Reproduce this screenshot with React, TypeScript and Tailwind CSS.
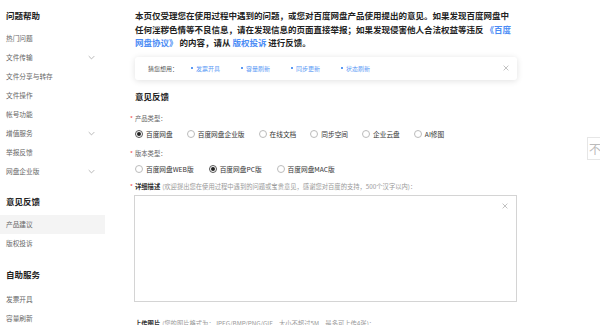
import type { ReactNode } from 'react'

const FONT = "font-['Noto_Sans_CJK_SC','Noto_Sans',sans-serif]"

const Chevron = () => (
  <svg className="w-[7px] h-[5px] text-[#999]" viewBox="0 0 10 6" fill="none" stroke="currentColor" strokeWidth={1}>
    <path d="M1 1l4 4 4-4" />
  </svg>
)

const Close = ({ className = '' }: { className?: string }) => (
  <svg className={`w-[6px] h-[6px] text-[#aaa] ${className}`} viewBox="0 0 10 10" stroke="currentColor" strokeWidth={1.2}>
    <path d="M1 1l8 8M9 1l-8 8" />
  </svg>
)

const SideHeading = ({ children }: { children: ReactNode }) => (
  <div className="h-[27px] flex items-center px-[6px] text-[8.5px] font-bold text-[#222]">{children}</div>
)

const SideItem = ({ label, chevron, active }: { label: string; chevron?: boolean; active?: boolean }) => (
  <div className={`h-[19px] flex items-center justify-between pl-[6px] pr-[10px] text-[6.7px] text-[#666] ${active ? 'bg-[#f4f4f4]' : ''}`}>
    <span>{label}</span>
    {chevron && <Chevron />}
  </div>
)

const Radio = ({ label, checked }: { label: string; checked?: boolean }) => (
  <label className="flex items-center gap-[3px]">
    <span
      className={`w-[8px] h-[8px] rounded-full border flex items-center justify-center ${
        checked ? 'border-[#555]' : 'border-[#bbb]'
      }`}
    >
      {checked && <span className="w-[4px] h-[4px] rounded-full bg-[#222]" />}
    </span>
    <span className="text-[6.7px] text-[#333]">{label}</span>
  </label>
)

const FieldLabel = ({ children }: { children: ReactNode }) => (
  <div className="flex items-center text-[6.3px] text-[#666]">
    <span className="text-[#f04a4a] w-[5px] -ml-[5px]">*</span>
    {children}
  </div>
)

const links = ['发票开具', '容量刷新', '同步更新', '状态刷新']

export default function App() {
  return (
    <div className={`relative w-[600px] h-[325px] overflow-hidden bg-white flex ${FONT}`}>
      <aside className="w-[105px] shrink-0 pt-[2px]">
        <SideHeading>问题帮助</SideHeading>
        <SideItem label="热门问题" />
        <SideItem label="文件传输" chevron />
        <SideItem label="文件分享与转存" />
        <SideItem label="文件操作" />
        <SideItem label="帐号功能" />
        <SideItem label="增值服务" chevron />
        <SideItem label="举报反馈" />
        <SideItem label="网盘企业版" chevron />
        <div className="mt-[7px]">
          <SideHeading>意见反馈</SideHeading>
          <SideItem label="产品建议" active />
          <SideItem label="版权投诉" />
        </div>
        <div className="mt-[8px]">
          <SideHeading>自助服务</SideHeading>
          <div className="h-[2px]" />
          <SideItem label="发票开具" />
          <SideItem label="容量刷新" />
        </div>
      </aside>

      <main className="flex-1 pl-[30px] pt-[9px]">
        <p className="w-[384px] text-[8.5px] leading-[13.5px] font-bold text-[#222]">
          本页仅受理您在使用过程中遇到的问题，或您对百度网盘产品使用提出的意见。如果发现百度网盘中
          <br />
          任何淫秽色情等不良信息，请在发现信息的页面直接举报；如果发现侵害他人合法权益等违反{' '}
          <span className="text-[#4b8cf5]">
            《百度
            <br />
            网盘协议》
          </span>{' '}
          的内容，请从 <span className="text-[#4b8cf5]">版权投诉</span> 进行反馈。
        </p>

        <div className="mt-[7px] w-[382px] h-[23px] rounded-[3px] shadow-[0_1px_6px_rgba(0,0,0,0.12)] flex items-center pl-[13px] pr-[8px]">
          <span className="text-[6px] text-[#555]">猜您想用：</span>
          <div className="flex items-center gap-[21px] ml-[13px]">
            {links.map((l) => (
              <span key={l} className="flex items-center gap-[3px] text-[6px] text-[#5b9af5]">
                <span className="w-[2px] h-[2px] bg-[#5b9af5]" />
                {l}
              </span>
            ))}
          </div>
          <Close className="ml-auto" />
        </div>

        <h3 className="mt-[11px] h-[12px] flex items-center text-[8.5px] font-bold text-[#222]">意见反馈</h3>

        <div className="mt-[11px] h-[10px] flex items-center">
          <FieldLabel>产品类型：</FieldLabel>
        </div>
        <div className="mt-[5px] h-[12px] flex items-center gap-[14px]">
          <Radio label="百度网盘" checked />
          <Radio label="百度网盘企业版" />
          <Radio label="在线文档" />
          <Radio label="同步空间" />
          <Radio label="企业云盘" />
          <Radio label="AI修图" />
        </div>

        <div className="mt-[8px] h-[10px] flex items-center">
          <FieldLabel>版本类型：</FieldLabel>
        </div>
        <div className="mt-[5px] h-[12px] flex items-center gap-[15px]">
          <Radio label="百度网盘WEB版" />
          <Radio label="百度网盘PC版" checked />
          <Radio label="百度网盘MAC版" />
        </div>

        <div className="mt-[6px] h-[10px] flex items-center">
          <FieldLabel>
            <span className="font-bold text-[#333]">详细描述</span>
            <span className="ml-[2px] text-[#999]">(欢迎提出您在使用过程中遇到的问题或宝贵意见，感谢您对百度的支持，500个汉字以内)：</span>
          </FieldLabel>
        </div>

        <div className="relative mt-[3px] -ml-[1px] w-[383px] h-[107px] border border-[#d4d4d4]">
          <Close className="absolute right-[8px] top-[7px]" />
        </div>

        <div className="mt-[17px] h-[10px] flex items-center text-[6.3px] text-[#999]">
          <span className="font-bold text-[#333]">上传图片</span>
          <span className="ml-[2px]">(您的图片格式为：JPEG/BMP/PNG/GIF，大小不超过5M，最多可上传4张)：</span>
        </div>
      </main>

      <div className="absolute left-[587px] top-[137px] w-[30px] h-[23px] border border-[#e6e6e6] bg-white flex items-center pl-[1px] text-[12px] text-[#bbb]">
        不
      </div>
    </div>
  )
}
